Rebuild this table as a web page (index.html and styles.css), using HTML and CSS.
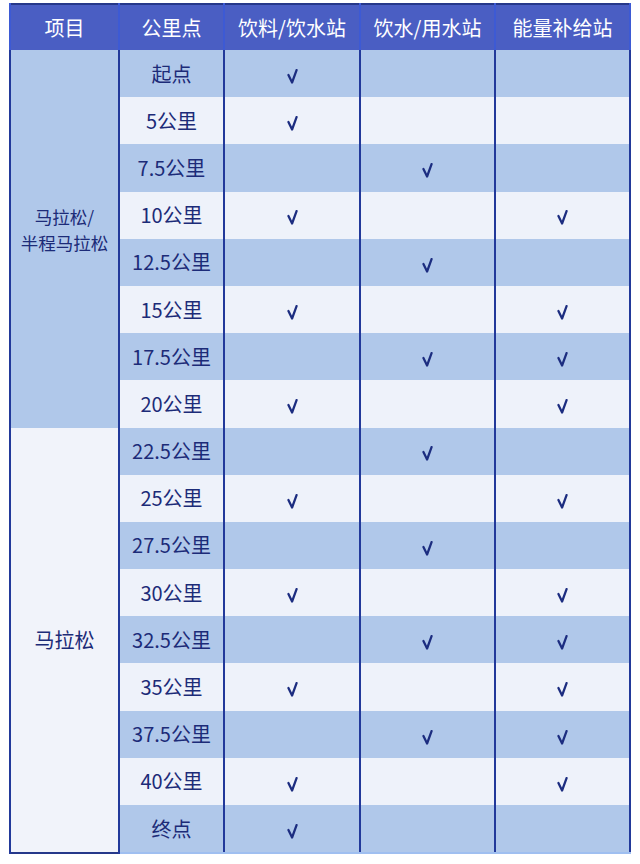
FILE: index.html
```html
<!DOCTYPE html>
<html lang="zh">
<head>
<meta charset="utf-8">
<title>补给站</title>
<link rel="stylesheet" href="styles.css">
</head>
<body>
<table class="tbl">
  <colgroup>
    <col class="c1"><col class="c2"><col class="c3"><col class="c4"><col class="c5">
  </colgroup>
  <thead>
    <tr><th>项目</th><th>公里点</th><th>饮料/饮水站</th><th>饮水/用水站</th><th>能量补给站</th></tr>
  </thead>
  <tbody>
    <tr class="d"><td rowspan="8" class="grp top d"><span class="ln">马拉松/</span><span class="ln">半程马拉松</span></td><td>起点</td><td class="ck"><svg viewBox="0 0 10 14"><path d="M1.2 5.5 L4.6 12.6 L8.8 1"/></svg></td><td></td><td></td></tr>
    <tr class="l"><td>5公里</td><td class="ck"><svg viewBox="0 0 10 14"><path d="M1.2 5.5 L4.6 12.6 L8.8 1"/></svg></td><td></td><td></td></tr>
    <tr class="d"><td>7.5公里</td><td></td><td class="ck"><svg viewBox="0 0 10 14"><path d="M1.2 5.5 L4.6 12.6 L8.8 1"/></svg></td><td></td></tr>
    <tr class="l"><td>10公里</td><td class="ck"><svg viewBox="0 0 10 14"><path d="M1.2 5.5 L4.6 12.6 L8.8 1"/></svg></td><td></td><td class="ck"><svg viewBox="0 0 10 14"><path d="M1.2 5.5 L4.6 12.6 L8.8 1"/></svg></td></tr>
    <tr class="d"><td>12.5公里</td><td></td><td class="ck"><svg viewBox="0 0 10 14"><path d="M1.2 5.5 L4.6 12.6 L8.8 1"/></svg></td><td></td></tr>
    <tr class="l"><td>15公里</td><td class="ck"><svg viewBox="0 0 10 14"><path d="M1.2 5.5 L4.6 12.6 L8.8 1"/></svg></td><td></td><td class="ck"><svg viewBox="0 0 10 14"><path d="M1.2 5.5 L4.6 12.6 L8.8 1"/></svg></td></tr>
    <tr class="d"><td>17.5公里</td><td></td><td class="ck"><svg viewBox="0 0 10 14"><path d="M1.2 5.5 L4.6 12.6 L8.8 1"/></svg></td><td class="ck"><svg viewBox="0 0 10 14"><path d="M1.2 5.5 L4.6 12.6 L8.8 1"/></svg></td></tr>
    <tr class="l"><td>20公里</td><td class="ck"><svg viewBox="0 0 10 14"><path d="M1.2 5.5 L4.6 12.6 L8.8 1"/></svg></td><td></td><td class="ck"><svg viewBox="0 0 10 14"><path d="M1.2 5.5 L4.6 12.6 L8.8 1"/></svg></td></tr>
    <tr class="d"><td rowspan="9" class="grp l">马拉松</td><td>22.5公里</td><td></td><td class="ck"><svg viewBox="0 0 10 14"><path d="M1.2 5.5 L4.6 12.6 L8.8 1"/></svg></td><td></td></tr>
    <tr class="l"><td>25公里</td><td class="ck"><svg viewBox="0 0 10 14"><path d="M1.2 5.5 L4.6 12.6 L8.8 1"/></svg></td><td></td><td class="ck"><svg viewBox="0 0 10 14"><path d="M1.2 5.5 L4.6 12.6 L8.8 1"/></svg></td></tr>
    <tr class="d"><td>27.5公里</td><td></td><td class="ck"><svg viewBox="0 0 10 14"><path d="M1.2 5.5 L4.6 12.6 L8.8 1"/></svg></td><td></td></tr>
    <tr class="l"><td>30公里</td><td class="ck"><svg viewBox="0 0 10 14"><path d="M1.2 5.5 L4.6 12.6 L8.8 1"/></svg></td><td></td><td class="ck"><svg viewBox="0 0 10 14"><path d="M1.2 5.5 L4.6 12.6 L8.8 1"/></svg></td></tr>
    <tr class="d"><td>32.5公里</td><td></td><td class="ck"><svg viewBox="0 0 10 14"><path d="M1.2 5.5 L4.6 12.6 L8.8 1"/></svg></td><td class="ck"><svg viewBox="0 0 10 14"><path d="M1.2 5.5 L4.6 12.6 L8.8 1"/></svg></td></tr>
    <tr class="l"><td>35公里</td><td class="ck"><svg viewBox="0 0 10 14"><path d="M1.2 5.5 L4.6 12.6 L8.8 1"/></svg></td><td></td><td class="ck"><svg viewBox="0 0 10 14"><path d="M1.2 5.5 L4.6 12.6 L8.8 1"/></svg></td></tr>
    <tr class="d"><td>37.5公里</td><td></td><td class="ck"><svg viewBox="0 0 10 14"><path d="M1.2 5.5 L4.6 12.6 L8.8 1"/></svg></td><td class="ck"><svg viewBox="0 0 10 14"><path d="M1.2 5.5 L4.6 12.6 L8.8 1"/></svg></td></tr>
    <tr class="l"><td>40公里</td><td class="ck"><svg viewBox="0 0 10 14"><path d="M1.2 5.5 L4.6 12.6 L8.8 1"/></svg></td><td></td><td class="ck"><svg viewBox="0 0 10 14"><path d="M1.2 5.5 L4.6 12.6 L8.8 1"/></svg></td></tr>
    <tr class="d last"><td>终点</td><td class="ck"><svg viewBox="0 0 10 14"><path d="M1.2 5.5 L4.6 12.6 L8.8 1"/></svg></td><td></td><td></td></tr>
  </tbody>
</table>
</body>
</html>
```

FILE: styles.css
```css
html, body {
  margin: 0;
  padding: 0;
  background: #ffffff;
}
body {
  padding: 3px 0 0 9px;
  font-family: "Noto Sans CJK SC", "Noto Sans", sans-serif;
}
.tbl {
  width: 620px;
  table-layout: fixed;
  border-collapse: collapse;
  border: 2px solid #26388a;
}
.c1 { width: 109px; }
.c2 { width: 105px; }
.c3 { width: 136px; }
.c4 { width: 135px; }
.c5 { width: 135px; }
.tbl th {
  height: 45px;
  background: #4a5ec3;
  color: #ffffff;
  font-size: 20px;
  font-weight: 400;
  text-align: center;
  vertical-align: middle;
  padding: 0;
  border-left: 2px solid #3d5ad4;
  border-right: 2px solid #3d5ad4;
  line-height: 1;
}
.tbl td {
  height: 47.2px;
  padding: 0;
  text-align: center;
  vertical-align: middle;
  color: #1c2b78;
  font-size: 20px;
  line-height: 1;
  border-left: 2px solid #22399a;
  border-right: 2px solid #22399a;
}
.tbl tr.d td { background: #b0c8ea; }
.tbl tr.l td { background: #eef2fa; }
.tbl tr td.grp.d { background: #b0c8ea; }
.tbl tr td.grp.l { background: #f1f3fa; }
.tbl td.grp.top {
  font-size: 17.5px;
  line-height: 1.45;
  padding-bottom: 18px;
}
.tbl td.grp .ln {
  display: block;
}
.tbl td.ck svg {
  display: inline-block;
  width: 11px;
  height: 15px;
  vertical-align: middle;
  margin-top: 1px;
}
.tbl td.ck path {
  fill: none;
  stroke: #1c2d80;
  stroke-width: 2.1;
  stroke-linecap: round;
  stroke-linejoin: round;
}
.tbl tr.last td { border-bottom: 2px solid #9fbff0; }
.tbl tr.last td.grp { border-bottom: none; }
```
